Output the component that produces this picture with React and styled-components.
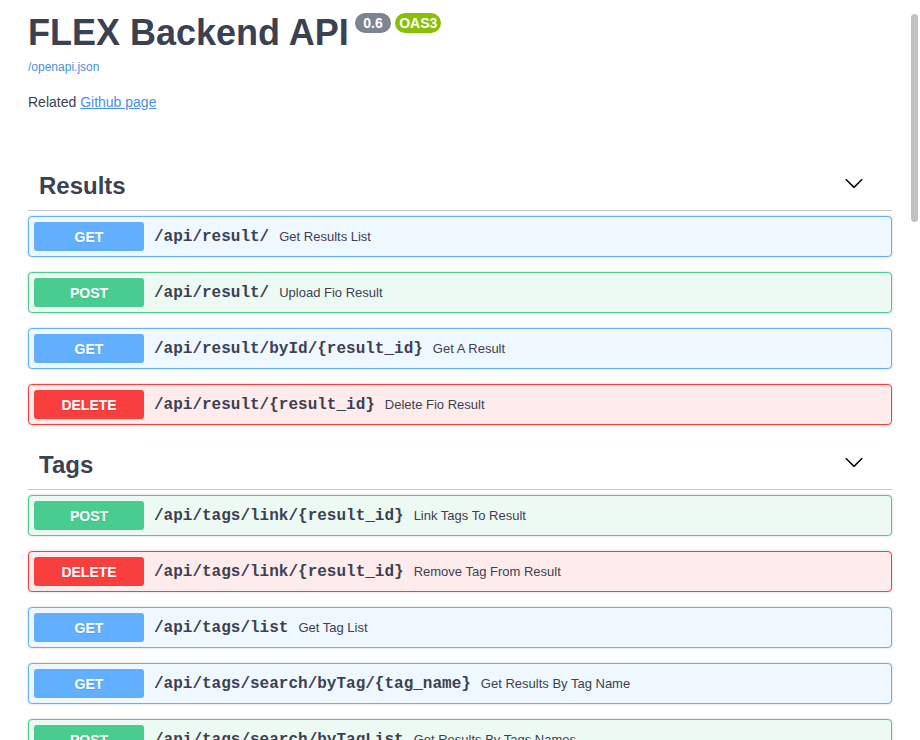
import styled, { createGlobalStyle } from "styled-components";

const GlobalStyle = createGlobalStyle`
  html, body {
    margin: 0;
    padding: 0;
    overflow: hidden;
    background: #fff;
  }
  body {
    font-family: "Liberation Sans", Arial, sans-serif;
    color: #3b4151;
  }
`;

const methodColors = {
  GET: { main: "#61affe", bg: "#eff7ff" },
  POST: { main: "#49cc90", bg: "#edfaf4" },
  DELETE: { main: "#f93e3e", bg: "#feecec" },
};

const Wrapper = styled.div`
  padding: 0 28px;
`;

const Info = styled.div`
  padding-top: 13px;
  margin-bottom: 49px;
`;

const TitleRow = styled.div`
  display: flex;
  align-items: flex-start;
`;

const Title = styled.h2`
  margin: 0;
  font-size: 36px;
  line-height: 40px;
  font-weight: 700;
  color: #3b4151;
`;

const Badge = styled.span`
  display: inline-flex;
  align-items: center;
  justify-content: center;
  height: 20px;
  margin-left: ${(p) => p.$gap}px;
  padding: 0 ${(p) => p.$pad}px;
  border-radius: 10px;
  background: ${(p) => p.$color};
  color: #fff;
  font-size: 14px;
  font-weight: 700;
`;

const BaseUrl = styled.a`
  display: block;
  margin-top: 6px;
  font-size: 12px;
  line-height: 16px;
  color: #4990e2;
  text-decoration: none;
`;

const Description = styled.p`
  margin: 17px 0 0;
  font-size: 14px;
  line-height: 20px;
  color: #3b4151;

  a {
    color: #4990e2;
    text-decoration: underline;
  }
`;

const Section = styled.section`
  display: flex;
  flex-direction: column;
`;

const TagHeader = styled.div`
  display: flex;
  align-items: flex-start;
  justify-content: space-between;
  height: 29px;
  padding: 10px 28px 10px 11px;
  border-bottom: 1px solid #c4c6cb;
  margin-bottom: 5px;
`;

const TagTitle = styled.h3`
  margin: 0;
  font-size: 24px;
  line-height: 29px;
  font-weight: 700;
  color: #3b4151;
`;

const Arrow = styled.svg`
  margin-top: 2px;
  fill: #000;
`;

const OpBlock = styled.div`
  display: flex;
  align-items: center;
  padding: 5px;
  margin-bottom: 15px;
  border: 1px solid ${(p) => methodColors[p.$method].main};
  border-radius: 4px;
  background: ${(p) => methodColors[p.$method].bg};
  box-shadow: 0 0 3px rgba(0, 0, 0, 0.19);
`;

const Method = styled.span`
  flex: none;
  display: flex;
  align-items: center;
  justify-content: center;
  width: 110px;
  height: 29px;
  border-radius: 3px;
  background: ${(p) => methodColors[p.$method].main};
  color: #fff;
  font-size: 14px;
  font-weight: 700;
  text-shadow: 0 1px 0 rgba(0, 0, 0, 0.1);
`;

const Path = styled.span`
  padding: 0 10px;
  font-family: "Liberation Mono", "Courier New", monospace;
  font-size: 16px;
  font-weight: 700;
  color: #3b4151;
`;

const Summary = styled.span`
  font-size: 13px;
  color: #3b4151;
`;

const ScrollThumb = styled.div`
  position: fixed;
  top: 14px;
  right: 2px;
  width: 7px;
  height: 208px;
  border-radius: 4px;
  background: #c1c1c1;
`;

const sections = [
  {
    name: "Results",
    ops: [
      ["GET", "/api/result/", "Get Results List"],
      ["POST", "/api/result/", "Upload Fio Result"],
      ["GET", "/api/result/byId/{result_id}", "Get A Result"],
      ["DELETE", "/api/result/{result_id}", "Delete Fio Result"],
    ],
  },
  {
    name: "Tags",
    ops: [
      ["POST", "/api/tags/link/{result_id}", "Link Tags To Result"],
      ["DELETE", "/api/tags/link/{result_id}", "Remove Tag From Result"],
      ["GET", "/api/tags/list", "Get Tag List"],
      ["GET", "/api/tags/search/byTag/{tag_name}", "Get Results By Tag Name"],
      ["POST", "/api/tags/search/byTagList", "Get Results By Tags Names"],
    ],
  },
];

const ChevronDown = () => (
  <Arrow width="20" height="20" viewBox="0 0 20 20">
    <path d="M17.418 6.109c.272-.268.709-.268.979 0s.271.701 0 .969l-7.908 7.83c-.27.268-.707.268-.979 0l-7.908-7.83c-.27-.268-.27-.701 0-.969.271-.268.709-.268.979 0L10 13.25l7.418-7.141z" />
  </Arrow>
);

export default function App() {
  return (
    <Wrapper>
      <GlobalStyle />
      <Info>
        <TitleRow>
          <Title>FLEX Backend API</Title>
          <Badge $color="#7d8492" $pad={8.5} $gap={6}>0.6</Badge>
          <Badge $color="#89bf04" $pad={4} $gap={4}>OAS3</Badge>
        </TitleRow>
        <BaseUrl href="#">/openapi.json</BaseUrl>
        <Description>
          Related <a href="#">Github page</a>
        </Description>
      </Info>
      {sections.map((s) => (
        <Section key={s.name}>
          <TagHeader>
            <TagTitle>{s.name}</TagTitle>
            <ChevronDown />
          </TagHeader>
          {s.ops.map(([m, path, summary], i) => (
            <OpBlock key={i} $method={m}>
              <Method $method={m}>{m}</Method>
              <Path>{path}</Path>
              <Summary>{summary}</Summary>
            </OpBlock>
          ))}
        </Section>
      ))}
      <ScrollThumb />
    </Wrapper>
  );
}
